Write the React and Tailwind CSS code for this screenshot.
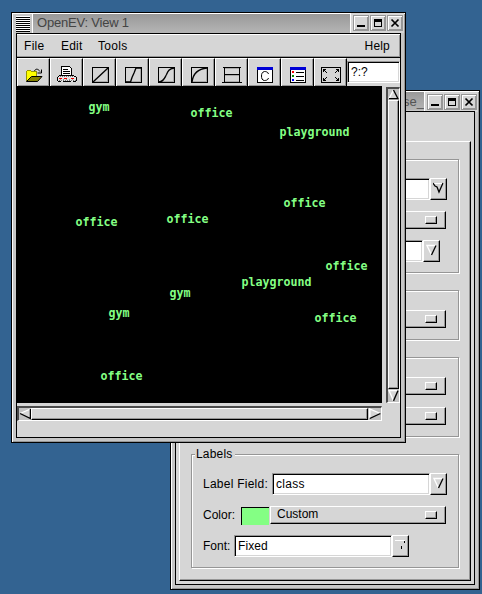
import React from "react";

const SANS = "font-['Liberation_Sans',Arial,sans-serif]";
const RAISED =
  "border border-t-white border-l-white border-r-black border-b-black bg-[#d6d6d6] shadow-[inset_-1px_-1px_0_#969696]";
const SUNKEN =
  "border border-t-[#969696] border-l-[#969696] border-r-white border-b-white bg-white shadow-[inset_1px_1px_0_#000,inset_-1px_-1px_0_#d6d6d6]";
const TROUGH =
  "border-t-2 border-l-2 border-r border-b border-t-[#4b4b4b] border-l-[#4b4b4b] border-r-white border-b-white bg-[#c3c3c3]";

function TitleButton({ kind }) {
  return (
    <svg width="16" height="16" className="shrink-0" shapeRendering="crispEdges">
      <rect width="16" height="16" fill="#969696" />
      <path d="M1 1h14v14h-14z" fill="#fff" />
      <path d="M2 2h13v13h-13z" fill="#969696" />
      <path d="M2 2h12v12h-12z" fill="#d6d6d6" />
      {kind === "min" && <path d="M4 10h8v2h-8z" fill="#000" />}
      {kind === "max" && <path d="M4 4h8v8h-8zM5 7v4h6v-4z" fillRule="evenodd" fill="#000" />}
      {kind === "close" && (
        <path d="M4.5 4.5l7 7M11.5 4.5l-7 7" stroke="#000" strokeWidth="1.7" shapeRendering="auto" />
      )}
    </svg>
  );
}

function TitleButtons() {
  return (
    <div className="flex h-[20px] w-[54px] shrink-0 items-center gap-px border-l border-white bg-[#d6d6d6] pl-[2px]">
      <TitleButton kind="min" />
      <TitleButton kind="max" />
      <TitleButton kind="close" />
    </div>
  );
}

function Arrow({ dir, className }) {
  const shapes = {
    up: ["M5.5 1L1 10.5", "M5.5 1L10 10.5H1"],
    down: ["M10 1.5H1L5.5 11", "M10 1.5L5.5 11"],
    left: ["M10.5 1L1 5.5", "M1 5.5L10.5 10.5V1"],
    right: ["M1.5 10.5V1L10.5 5.5", "M1.5 10.5L10.5 5.5"],
  };
  const body = {
    up: "M5.5 1L1 10.5H10z",
    down: "M10 1.5H1L5.5 11z",
    left: "M10.5 1L1 5.5L10.5 10.5z",
    right: "M1.5 10.5V1L10.5 5.5z",
  };
  return (
    <svg viewBox="0 0 11 12" className={className} preserveAspectRatio="none">
      <path d={body[dir]} fill="#d6d6d6" />
      <path d={shapes[dir][0]} fill="none" stroke="#fff" strokeWidth="1.3" />
      <path d={shapes[dir][1]} fill="none" stroke="#000" strokeWidth="1.3" />
    </svg>
  );
}

function Plot({ d }) {
  return (
    <g>
      <path d="M10 23.5H24.5V10" fill="none" stroke="#aaa" />
      <rect x="9.5" y="9.5" width="16" height="15" fill="none" stroke="#000" />
      <path d={d} fill="none" stroke="#000" shapeRendering="auto" strokeWidth="1.35" />
    </g>
  );
}

const TOOLS = [
  <g key="open">
    <path d="M9 23V13h1v-1h4v1h6v5h-6l-4 5z" fill="#ff0" />
    <path d="M9.5 23V13M10 12.5h4M14 13.5h5.5V18" fill="none" stroke="#969600" />
    <path d="M9.5 23.5L14.5 18.5H25L20.5 23.5z" fill="#848200" stroke="#000" strokeWidth="1" shapeRendering="auto" />
    <path d="M17.5 13C18.5 10.5 21 10.5 23 13.500M24.500 11.500v3.500h-4" fill="none" stroke="#000" shapeRendering="auto" />
  </g>,
  <g key="print">
    <path d="M11.500 17.500V8.500H19.500L21.500 10.500V17.500z" fill="#fff" stroke="#000" />
    <path d="M13 11.500h5M13 13.500h7M13 15.500h7" stroke="#000" />
    <path d="M9 17h15l3 3v4H7v-4z" fill="#e6e6e6" />
    <path d="M9 17.500h15M8 18.500h1M24 18.500h2M7.500 19v4M26.500 19v4M8 23.500h3M13 23.500h8M23 23.500h3" stroke="#000" />
    <path d="M10 18.500h14M9 22.500h17" stroke="#777" strokeDasharray="1 1" />
    <path d="M10 21.500h15" stroke="#999" strokeDasharray="1 2" />
    <path d="M9 20.500h3M14 20.500h3M21 20.500h3" stroke="#e00" />
  </g>,
  <Plot key="linear" d="M10 24L25 10" />,
  <Plot key="steep" d="M10 24H14.500L16 19.500L18 15L20 10H25" />,
  <Plot key="sigmoid" d="M10 24C15 23.500 15.500 20 17.500 16.500C19 13 20 11 25 10" />,
  <Plot key="root" d="M10 24C11 16 15 11 25 10" />,
  <g key="ladder">
    <path d="M10 10.5H24M10 17.5H24M10 23.5H24" stroke="#aaa" />
    <path d="M8 9.500H26M9 16.500H25M7 24.500H27M9.500 9V24M24.500 9V24" fill="none" stroke="#000" />
  </g>,
  <g key="classify">
    <rect x="9.500" y="9.500" width="15" height="15" fill="#fff" stroke="#000" />
    <path d="M9 9h16v3H9z" fill="#0000d6" />
    <path d="M20.500 16C20 13.500 17 13.500 16.500 13.500C14 14 13.500 16 13.500 18C13.500 20 14 22.500 16.500 22.500C17 22.500 20 22.500 20.500 20" fill="none" stroke="#000" shapeRendering="auto" />
  </g>,
  <g key="legend">
    <rect x="9.500" y="9.500" width="15" height="15" fill="#fff" stroke="#000" />
    <path d="M9 9h16v3H9z" fill="#0000d6" />
    <path d="M11 13h2v2h-2z" fill="#f00" />
    <path d="M11 17h2v2h-2z" fill="#080" />
    <path d="M11 21h2v2h-2z" fill="#00f" />
    <path d="M15 14.500h8M15 18.500h8M15 22.500h8" stroke="#000" />
  </g>,
  <g key="fit">
    <rect x="7.500" y="9.500" width="19" height="15" fill="none" stroke="#000" />
    <path
      d="M9.500 14V11.500H12M10 12L13 15M24.500 14V11.500H22M24 12L21 15M9.500 20V22.500H12M10 22L13 19M24.500 20V22.500H22M24 22L21 19"
      fill="none"
      stroke="#000"
    />
  </g>,
];

const LABELS = [
  ["gym", 88.5, 111],
  ["office", 190.5, 117],
  ["playground", 279.5, 136],
  ["office", 283.5, 207],
  ["office", 75.5, 226],
  ["office", 166.5, 223],
  ["office", 325.5, 270],
  ["playground", 241.5, 286],
  ["gym", 169.5, 297],
  ["gym", 108.5, 317],
  ["office", 314.5, 322],
  ["office", 100.5, 380],
];

function Entry({ value, className, drop = "down" }) {
  return (
    <div className="flex h-[22px]">
      <div className={`${SUNKEN} ${className} pl-[3px] leading-[20px]`}>{value}</div>
      <div className={`${RAISED} flex w-[17px] justify-center pt-[3px]`}>
        {drop === "down" && <Arrow dir="down" className="h-[12px] w-[11px]" />}
        {drop === "pressed" && (
          <svg width="11" height="12" className="shrink-0">
            <path d="M0 1.500h11" stroke="#fff" />
            <path d="M0 1l2 3 2 1 2 5L10 1" fill="none" stroke="#000" strokeWidth="1.300" />
          </svg>
        )}
        {drop === "small" && (
          <svg width="11" height="12" className="shrink-0" shapeRendering="crispEdges">
            <path d="M0 1.500h10" stroke="#fff" />
            <path d="M9.500 2v2M6.500 7v3" stroke="#000" />
          </svg>
        )}
      </div>
    </div>
  );
}

function Option({ children, className }) {
  return (
    <div className={`${RAISED} ${className} flex h-[18px] items-center justify-between pr-[8px] pl-[6px] leading-[14px]`}>
      <span className="-mt-[2px]">{children}</span>
      <span className={`${RAISED} h-[8px] w-[12px]`} />
    </div>
  );
}

function Group({ children, className }) {
  return (
    <div className={`${className} w-[268px] border border-[#969696] shadow-[inset_1px_1px_0_#fff,1px_1px_0_#fff]`}>
      {children}
    </div>
  );
}

function BackWindow() {
  return (
    <div className="absolute top-[90px] left-[170px] flex h-[500px] w-[310px] flex-col border border-black bg-[#c6c6c6] pl-[4px] pr-[4px] shadow-[inset_1px_1px_0_#fff,inset_-1px_-1px_0_#969696]">
      <div className="-mr-[3px] flex h-[20px] shrink-0 pt-px">
        <div className="flex h-[18px] flex-1 justify-end overflow-hidden bg-gradient-to-b from-[#999] to-[#b5b5b5] text-[13px] leading-[19px] whitespace-nowrap text-[#555]">
          View 1 Properties: class_base_
        </div>
        <TitleButtons />
      </div>
      <div className="h-[474px] w-[300px] border border-black bg-[#d6d6d6] pt-[29px] pl-[3px]">
        <div className="h-[440px] w-[292px] border border-t-white border-l-white border-r-black border-b-black pt-[17px] pl-[11px] shadow-[inset_-1px_-1px_0_#969696]">
          <Group className="flex h-[114px] flex-col items-start gap-[11px] pt-[18px] pl-[80px]">
            <Entry value="" className="w-[158px]" drop="pressed" />
            <Option className="w-[174px]" />
            <Entry value="" className="w-[151px]" />
          </Group>
          <Group className="mt-[17px] h-[50px] pt-[19px] pl-[78px]">
            <Option className="w-[176px]" />
          </Group>
          <Group className="mt-[17px] flex h-[80px] flex-col gap-[12px] pt-[19px] pl-[78px]">
            <Option className="w-[176px]" />
            <Option className="w-[176px]" />
          </Group>
          <Group className="mt-[17px] h-[114px] pl-[3px]">
            <div className="-mt-[8px] h-[16px] w-[40px] bg-[#d6d6d6] pl-px leading-[15px] tracking-[0.2px]">Labels</div>
            <div className="mt-[10px] flex h-[22px] items-center pl-[8px]">
              <span className="w-[69px] tracking-[0.25px]">Label Field:</span>
              <Entry value="class" className="w-[158px] tracking-[0.3px]" />
            </div>
            <div className="mt-[11px] flex h-[20px] items-start pl-[8px]">
              <span className="w-[38px] leading-[18px]">Color:</span>
              <span className="mt-px h-[18px] w-[28px] border-t border-l border-black bg-[#84ff84]" />
              <Option className="ml-px w-[176px]">Custom</Option>
            </div>
            <div className="mt-[9px] flex h-[22px] items-center pl-[8px]">
              <span className="w-[31px]">Font:</span>
              <Entry value="Fixed" className="w-[158px] tracking-[0.1px]" drop="small" />
            </div>
          </Group>
        </div>
      </div>
    </div>
  );
}

function FrontWindow() {
  return (
    <div className="absolute top-[12px] left-[11px] flex h-[431px] w-[395px] flex-col border border-black bg-[#c6c6c6] pl-[4px] shadow-[inset_1px_1px_0_#fff,inset_-1px_-1px_0_#969696]">
      <div className="-ml-[3px] flex h-[20px] shrink-0 pr-px">
        <div className="flex w-[19px] shrink-0 items-center pl-[3px] pt-px">
          <div className="h-[16px] w-[14px] bg-[repeating-linear-gradient(to_bottom,#fff_0_1px,#000_1px_2px)]" />
        </div>
        <div className="mt-px w-px bg-white" />
        <div className="mt-px flex-1 bg-gradient-to-b from-[#999] to-[#b5b5b5] pl-[4px] text-[13px] leading-[18px] tracking-[-0.2px] text-[#444]">
          OpenEV: View 1
        </div>
        <TitleButtons />
      </div>
      <div className="flex h-[405px] w-[385px] flex-col border border-black bg-[#d6d6d6]">
        <div className="flex h-[24px] shrink-0 items-center border-b border-t border-t-white border-b-black pl-[7px] pr-[10px] shadow-[inset_-1px_-1px_0_#969696]">
          <span className="w-[37px] tracking-[0.3px]">File</span>
          <span className="w-[37px] tracking-[0.2px]">Edit</span>
          <span className="flex-1 tracking-[0.3px]">Tools</span>
          <span className="tracking-[0.2px]">Help</span>
        </div>
        <div className="flex h-[28px] shrink-0">
          {TOOLS.map((icon, i) => (
            <div
              key={i}
              className="h-[28px] w-[33px] shrink-0 border-t border-l border-r border-t-white border-l-white border-r-black shadow-[inset_-1px_-1px_0_#969696]"
            >
              <svg width="33" height="28" className="-mt-px -ml-px max-w-none" shapeRendering="crispEdges">
                {icon}
              </svg>
            </div>
          ))}
          <div className={`${SUNKEN} mt-[3px] h-[22px] flex-1 pl-[3px] leading-[20px]`}>?:?</div>
        </div>
        <div className="flex h-[317px] shrink-0">
          <div className="w-[365px] shrink-0 bg-black" />
          <div className={`${TROUGH} mt-px ml-[4px] flex w-[14px] flex-col`}>
            <Arrow dir="up" className="h-[11px] w-[11px] shrink-0" />
            <div className={`${RAISED} flex-1`} />
            <Arrow dir="down" className="h-[13px] w-[11px] shrink-0" />
          </div>
        </div>
        <div className={`${TROUGH} mt-[3px] flex h-[15px] w-[365px] shrink-0`}>
          <Arrow dir="left" className="h-[12px] w-[12px] shrink-0" />
          <div className={`${RAISED} flex-1`} />
          <Arrow dir="right" className="h-[12px] w-[13px] shrink-0" />
        </div>
      </div>
    </div>
  );
}

export default function App() {
  return (
    <div className={`${SANS} relative h-[594px] w-[482px] overflow-hidden bg-[#336391] text-[12px] text-black`}>
      <BackWindow />
      <FrontWindow />
      {LABELS.map(([text, x, baseline]) => (
        <span
          key={`${x}-${baseline}`}
          className="absolute font-['DejaVu_Sans_Mono',monospace] text-[11.63px] leading-[14px] font-bold text-[#84ff84]"
          style={{ left: x, top: baseline - 11 }}
        >
          {text}
        </span>
      ))}
    </div>
  );
}
